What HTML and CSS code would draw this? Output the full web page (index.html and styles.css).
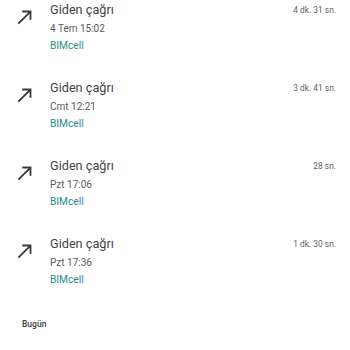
FILE: index.html
```html
<!DOCTYPE html>
<html lang="tr">
<head>
<meta charset="utf-8">
<link rel="stylesheet" href="styles.css">
</head>
<body>
<div class="list">
  <div class="row">
    <div class="icon"><svg viewBox="0 0 24 24" width="22" height="22"><path d="M9 5v2h6.59L4 18.59 5.41 20 17 8.41V15h2V5z" fill="#3a3a3a"/></svg></div>
    <div class="info">
      <div class="title">Giden çağrı</div>
      <div class="date">4 Tem 15:02</div>
      <div class="sim">BIMcell</div>
    </div>
    <div class="dur">4 dk. 31 sn.</div>
  </div>
  <div class="row">
    <div class="icon"><svg viewBox="0 0 24 24" width="22" height="22"><path d="M9 5v2h6.59L4 18.59 5.41 20 17 8.41V15h2V5z" fill="#3a3a3a"/></svg></div>
    <div class="info">
      <div class="title">Giden çağrı</div>
      <div class="date">Cmt 12:21</div>
      <div class="sim">BIMcell</div>
    </div>
    <div class="dur">3 dk. 41 sn.</div>
  </div>
  <div class="row">
    <div class="icon"><svg viewBox="0 0 24 24" width="22" height="22"><path d="M9 5v2h6.59L4 18.59 5.41 20 17 8.41V15h2V5z" fill="#3a3a3a"/></svg></div>
    <div class="info">
      <div class="title">Giden çağrı</div>
      <div class="date">Pzt 17:06</div>
      <div class="sim">BIMcell</div>
    </div>
    <div class="dur">28 sn.</div>
  </div>
  <div class="row">
    <div class="icon"><svg viewBox="0 0 24 24" width="22" height="22"><path d="M9 5v2h6.59L4 18.59 5.41 20 17 8.41V15h2V5z" fill="#3a3a3a"/></svg></div>
    <div class="info">
      <div class="title">Giden çağrı</div>
      <div class="date">Pzt 17:36</div>
      <div class="sim">BIMcell</div>
    </div>
    <div class="dur">1 dk. 30 sn.</div>
  </div>
</div>
<div class="section">Bugün</div>
</body>
</html>
```
FILE: styles.css
```css
html, body {
  margin: 0;
  padding: 0;
  background: #ffffff;
  font-family: Roboto, "Liberation Sans", sans-serif;
}
.list {
  display: flex;
  flex-direction: column;
}
.row {
  display: flex;
  height: 78px;
  box-sizing: border-box;
  padding: 1px 14px 0 14px;
}
.icon {
  width: 22px;
  height: 22px;
  margin-top: 5px;
  margin-right: 14px;
}
.icon svg {
  display: block;
}
.info {
  flex: 1;
  display: flex;
  flex-direction: column;
}
.title {
  font-size: 12.7px;
  line-height: 18px;
  color: #444444;
}
.date {
  font-size: 10px;
  line-height: 14px;
  margin-top: 2.5px;
  color: #5a5a5a;
}
.sim {
  font-size: 10.2px;
  line-height: 14px;
  margin-top: 3.5px;
  color: #268c8c;
}
.dur {
  font-size: 8.4px;
  line-height: 12px;
  margin-top: 3px;
  color: #5f5f5f;
}
.section {
  margin: 6px 0 0 22px;
  font-size: 8.5px;
  line-height: 12px;
  font-weight: 500;
  color: #3a3a3a;
}
```
